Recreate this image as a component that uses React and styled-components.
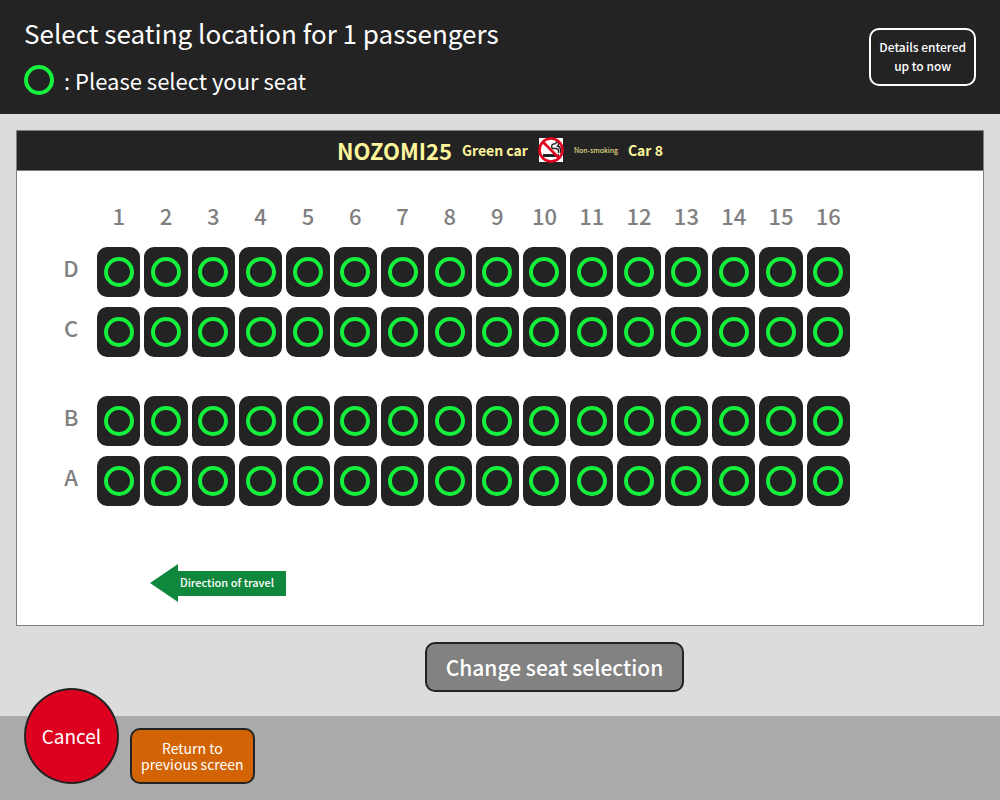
import styled, { createGlobalStyle } from "styled-components";

const columns = Array.from({ length: 16 }, (_, index) => index + 1);
const seatBlocks = [
  ["D", "C"],
  ["B", "A"],
];

const GlobalStyle = createGlobalStyle`
  *,
  *::before,
  *::after {
    box-sizing: border-box;
  }

  body {
    margin: 0;
    background: #dcdcdc;
    font-family: "Noto Sans CJK JP", "Noto Sans", sans-serif;
  }

  button {
    font-family: inherit;
    cursor: pointer;
  }

  h1, h2, p {
    margin: 0;
    font-weight: 400;
  }
`;

const Page = styled.div`
  display: flex;
  flex-direction: column;
  min-height: 100vh;
`;

const Header = styled.header`
  align-items: flex-start;
  background: #232323;
  color: #fff;
  display: flex;
  justify-content: space-between;
  padding: 16px 24px;
`;

const HeaderText = styled.div`
  display: flex;
  flex-direction: column;
  gap: 12px;
`;

const Title = styled.h1`
  font-size: 26px;
  line-height: 34px;
`;

const Legend = styled.p`
  align-items: center;
  display: flex;
  font-size: 22px;
  gap: 10px;
  line-height: 36px;
`;

const Ring = styled.span`
  border: 4px solid #14f03c;
  border-radius: 50%;
  display: block;
  flex: none;
  height: 30px;
  width: 30px;
`;

const DetailsButton = styled.button`
  background: transparent;
  border: 2px solid #fff;
  border-radius: 10px;
  color: #fff;
  font-size: 12px;
  font-weight: 500;
  line-height: 19px;
  margin-top: 12px;
  padding: 7px 8px 9px;
`;

const Main = styled.main`
  display: flex;
  flex: 1;
  flex-direction: column;
  padding: 16px 16px 24px;
`;

const Board = styled.section`
  background: #fff;
  border: 1px solid #808080;
`;

const Banner = styled.div`
  align-items: center;
  background: #232323;
  border-bottom: 1px solid #808080;
  color: #fff59b;
  display: flex;
  gap: 10px;
  height: 40px;
  justify-content: center;
  padding-bottom: 2px;
`;

const TrainName = styled.h2`
  font-size: 22px;
  font-weight: 700;
`;

const TrainInfo = styled.p`
  font-size: 14px;
  font-weight: 700;
`;

const SmokingNote = styled.p`
  font-size: 7px;
`;

const SeatMap = styled.div`
  display: flex;
  flex-direction: column;
  padding: 26px 133px 23px 32px;
`;

const SeatBlock = styled.div`
  display: flex;
  flex-direction: column;
  gap: 10px;
  margin-bottom: 39px;
`;

const Row = styled.div`
  display: grid;
  gap: 4px;
  grid-template-columns: 44px repeat(16, 1fr);
`;

const NumberRow = styled(Row)`
  margin-bottom: 14px;
`;

const Label = styled.span`
  color: #808080;
  font-size: 22px;
  font-weight: 500;
  line-height: 36px;
  padding-top: ${(props) => (props.$row ? "2px" : 0)};
  text-align: center;
`;

const Seat = styled.button`
  align-items: center;
  background: #232323;
  border: 0;
  border-radius: 10px;
  display: flex;
  height: 50px;
  justify-content: center;
  padding: 0;
`;

const Direction = styled.p`
  align-items: center;
  background: #0f873c;
  clip-path: polygon(
    0 50%,
    28px 0,
    28px 7px,
    100% 7px,
    100% calc(100% - 6px),
    28px calc(100% - 6px),
    28px 100%
  );
  color: #fff;
  display: flex;
  font-size: 11px;
  font-weight: 500;
  height: 38px;
  margin: 19px 0 0 101px;
  padding: 0 12px 2px 30px;
  width: max-content;
`;

const Actions = styled.div`
  display: flex;
  justify-content: center;
  padding: 16px 0 0 109px;
`;

const ChangeButton = styled.button`
  background: #828282;
  border: 2px solid #232323;
  border-radius: 10px;
  color: #fff;
  font-size: 21px;
  font-weight: 500;
  height: 50px;
  padding: 0 19px;
`;

const Footer = styled.footer`
  align-items: flex-end;
  background: #aaa;
  display: flex;
  gap: 11px;
  height: 84px;
  padding: 0 24px 16px;
`;

const CancelButton = styled.button`
  background: #dc001e;
  border: 2px solid #232323;
  border-radius: 50%;
  color: #fff;
  flex: none;
  font-size: 19px;
  height: 96px;
  padding: 0 0 2px;
  width: 95px;
`;

const ReturnButton = styled.button`
  background: #d26405;
  border: 2px solid #232323;
  border-radius: 10px;
  color: #fff;
  font-size: 14px;
  height: 56px;
  line-height: 16px;
  padding: 0 9px;
`;

function NoSmokingIcon() {
  return (
    <svg width="26" height="26" viewBox="0 0 26 26" aria-hidden="true">
      <path fill="#fff" d="M1 1h24v24H1z" />
      <path fill="#232323" d="M5 17h14v3H5zM20 17h1v3h-1zM22 17h1v3h-1z" />
      <path
        d="M20.5 16v-2c0-2-1-2.5-3-2.5h-2c-2.5 0-2.5-4 0-4.5 2 0 3.500-1 3-3M22.5 16v-3c0-2-1-3.5-3-4 1.5-1 1.5-3 0-4"
        fill="none"
        stroke="#232323"
        strokeWidth="1.4"
      />
      <circle
        cx="13"
        cy="13"
        r="11.5"
        fill="none"
        stroke="#e1001e"
        strokeWidth="2.6"
      />
      <path d="M5 5l16 16" stroke="#e1001e" strokeWidth="2.6" />
    </svg>
  );
}

export default function App() {
  return (
    <>
      <GlobalStyle />
      <Page>
        <Header>
          <HeaderText>
            <Title>Select seating location for 1 passengers</Title>
            <Legend>
              <Ring />: Please select your seat
            </Legend>
          </HeaderText>
          <DetailsButton type="button">
            Details entered
            <br />
            up to now
          </DetailsButton>
        </Header>
        <Main>
          <Board>
            <Banner>
              <TrainName>NOZOMI25</TrainName>
              <TrainInfo>Green car</TrainInfo>
              <NoSmokingIcon />
              <SmokingNote>Non-smoking</SmokingNote>
              <TrainInfo>Car 8</TrainInfo>
            </Banner>
            <SeatMap>
              <NumberRow>
                <span />
                {columns.map((number) => (
                  <Label key={number}>{number}</Label>
                ))}
              </NumberRow>
              {seatBlocks.map((rows) => (
                <SeatBlock key={rows[0]}>
                  {rows.map((letter) => (
                    <Row key={letter}>
                      <Label $row>{letter}</Label>
                      {columns.map((number) => (
                        <Seat
                          key={number}
                          type="button"
                          aria-label={`Seat ${number}${letter}`}
                        >
                          <Ring />
                        </Seat>
                      ))}
                    </Row>
                  ))}
                </SeatBlock>
              ))}
              <Direction>Direction of travel</Direction>
            </SeatMap>
          </Board>
          <Actions>
            <ChangeButton type="button">Change seat selection</ChangeButton>
          </Actions>
        </Main>
        <Footer>
          <CancelButton type="button">Cancel</CancelButton>
          <ReturnButton type="button">
            Return to
            <br />
            previous screen
          </ReturnButton>
        </Footer>
      </Page>
    </>
  );
}
